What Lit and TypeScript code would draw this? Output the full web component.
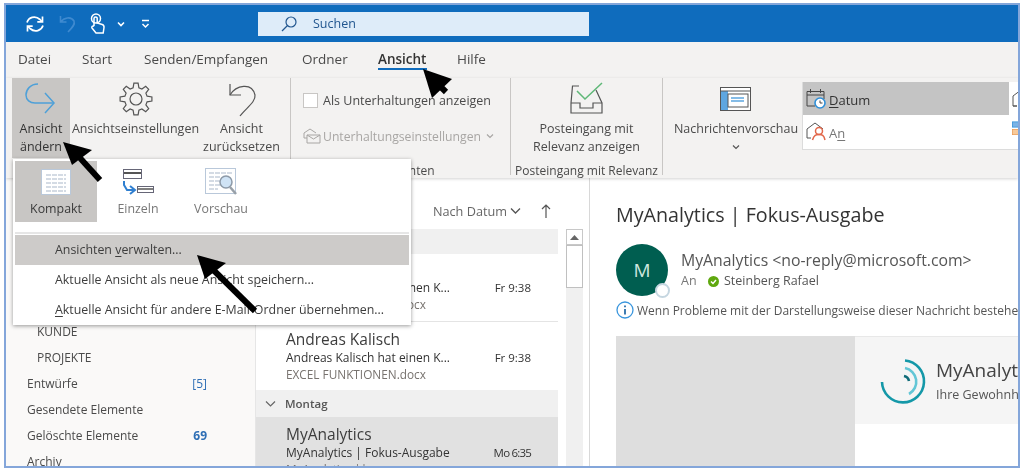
import { LitElement, html, css, svg } from "lit";
import { customElement } from "lit/decorators.js";

// 8 tooth gear outline, returned as svg polygon points
function gearPoints(cx: number, cy: number, outer: number, inner: number) {
  const pts: string[] = [];
  const teeth = 8;
  for (let i = 0; i < teeth; i++) {
    const a = (i / teeth) * Math.PI * 2;
    const step = (Math.PI * 2) / teeth;
    const list: [number, number][] = [
      [inner, a - step * 0.32],
      [outer, a - step * 0.17],
      [outer, a + step * 0.17],
      [inner, a + step * 0.32],
    ];
    for (const [r, t] of list) {
      pts.push(`${(cx + r * Math.cos(t)).toFixed(1)},${(cy + r * Math.sin(t)).toFixed(1)}`);
    }
  }
  return pts.join(" ");
}

const FOLDERS = [
  { name: "KUNDE", sub: true },
  { name: "PROJEKTE", sub: true },
  { name: "Entwürfe", count: "[5]" },
  { name: "Gesendete Elemente" },
  { name: "Gelöschte Elemente", count: "69", bold: true },
  { name: "Archiv" },
];

const TABS = ["Datei", "Start", "Senden/Empfangen", "Ordner", "Ansicht", "Hilfe"];

@customElement("app-root")
export class AppRoot extends LitElement {
  static styles = css`
    :host {
      display: block;
      width: 1024px;
      height: 471px;
      overflow: hidden;
      background: #fff;
      font-family: "Open Sans", "Noto Sans", sans-serif;
      color: #444;
    }
    svg { display: block; }
    .frame {
      position: relative;
      box-sizing: border-box;
      margin: 3px 4px 0;
      width: 1016px;
      height: 465px;
      border: 2px solid #84a6da;
      display: flex;
      flex-direction: column;
      overflow: hidden;
      filter: blur(0.4px);
    }

    /* title bar */
    .title {
      height: 37px;
      flex: none;
      background: #0f6cbd;
      display: flex;
      align-items: center;
      padding-left: 19px;
    }
    .qat { display: flex; align-items: center; width: 233px; }
    .search {
      width: 331px;
      height: 24px;
      background: #deecf9;
      display: flex;
      align-items: center;
      gap: 16px;
      padding-left: 23px;
      box-sizing: border-box;
      color: #21568f;
      font-size: 12.5px;
    }

    /* tabs */
    .tabs {
      height: 36px;
      flex: none;
      background: #f3f2f1;
      display: flex;
      align-items: center;
      padding: 0 0 2px 12px;
      box-sizing: border-box;
      font-size: 13.5px;
      color: #4a4a4a;
    }
    .tab { position: relative; line-height: 18px; }
    .tab:nth-child(1) { width: 64px; }
    .tab:nth-child(2) { width: 62px; }
    .tab:nth-child(3) { width: 158px; }
    .tab:nth-child(4) { width: 76px; }
    .tab:nth-child(5) { width: 79px; }
    .tab.on { color: #333; font-weight: 600; }
    .tab.on::after {
      content: "";
      position: absolute;
      left: 0;
      bottom: -2px;
      width: 49px;
      height: 2.5px;
      background: #0f6cbd;
    }

    /* ribbon */
    .ribbon {
      height: 100px;
      flex: none;
      background: #f3f2f1;
      display: flex;
      box-shadow: 0 1px 3px rgba(0, 0, 0, 0.18);
      position: relative;
      z-index: 1;
      font-size: 12.5px;
      color: #4a4a4a;
    }
    .group {
      position: relative;
      flex: none;
      box-sizing: border-box;
      height: 97px;
      border-right: 1px solid #c8c6c4;
      display: flex;
    }
    .g1 { width: 285px; padding-left: 6px; }
    .g2 { width: 220px; padding: 13px 0 0 12px; flex-direction: column; }
    .g3 { width: 152px; justify-content: center; }
    .g4 { border: none; flex: 1; padding-left: 11px; }
    .group-label {
      position: absolute;
      bottom: -3px;
      left: 0;
      right: 0;
      text-align: center;
      font-size: 12px;
      line-height: 15px;
      white-space: nowrap;
    }
    .big {
      display: flex;
      flex-direction: column;
      align-items: center;
      text-align: center;
      line-height: 18px;
      box-sizing: border-box;
      height: 80px;
      padding-top: 3px;
      white-space: nowrap;
    }
    .big svg { height: 38px; flex: none; margin-bottom: 1px; }
    .big.active { width: 58px; background: #c8c6c4; color: #333; }
    .big.settings { width: 127px; margin-left: 2px; }
    .big.reset { width: 73px; margin-left: 6px; }
    .big.relevance { width: 150px; }
    .big.preview { width: 124px; }
    .check-row { display: flex; align-items: center; gap: 5px; height: 18px; white-space: nowrap; }
    .checkbox { width: 13px; height: 13px; background: #fff; border: 1px solid #c8c6c4; flex: none; }
    .conv-row {
      display: flex;
      align-items: center;
      gap: 2px;
      height: 18px;
      margin-top: 18px;
      color: #a8a6a4;
      font-size: 12.2px;
      white-space: nowrap;
    }
    .gallery {
      margin: 4px 0 0 4px;
      flex: none;
      width: 218px;
      height: 67px;
      background: #fff;
      border-bottom: 1px solid #dcdcdc;
      border-left: 1px solid #dcdcdc;
      display: grid;
      grid-template-columns: 206px 12px;
      grid-template-rows: 33px 33px;
      font-size: 13px;
    }
    .cell { display: flex; align-items: center; gap: 3px; padding-left: 3px; overflow: hidden; }
    .cell.sel { background: #c4c4c4; color: #333; }
    .cell span { padding-top: 3px; }
    .cell u { text-underline-offset: 2px; }

    /* main area */
    .main { flex: 1; display: flex; min-height: 0; }
    .folders {
      width: 250px;
      flex: none;
      background: #faf9f8;
      border-right: 1px solid #e6e6e6;
      box-sizing: border-box;
      padding-top: 140px;
      font-size: 12px;
      color: #4a4a4a;
    }
    .folder {
      height: 26px;
      display: flex;
      align-items: center;
      justify-content: space-between;
      padding: 0 48px 0 21px;
      white-space: nowrap;
    }
    .folder.sub { padding-left: 31px; }
    .count { color: #2f6fb5; }
    .count.bold { font-weight: 700; }

    .list { width: 302px; flex: none; display: flex; flex-direction: column; }
    .sort {
      height: 51px;
      flex: none;
      display: flex;
      align-items: center;
      justify-content: flex-end;
      gap: 3px;
      padding-right: 7px;
      padding-top: 15px;
      box-sizing: border-box;
      font-size: 12.7px;
      color: #666;
    }
    .sort svg:last-child { margin-left: 17px; }
    .day {
      height: 25px;
      flex: none;
      background: #f0f0f0;
      display: flex;
      align-items: center;
      gap: 9px;
      padding-left: 9px;
      font-size: 11.5px;
      font-weight: 600;
      color: #555;
    }
    .mail {
      flex: none;
      box-sizing: border-box;
      padding-left: 30px;
      border-bottom: 1px solid #e4e4e4;
      color: #4a4a4a;
    }
    .mail.first { height: 68px; padding-top: 25px; }
    .mail.second { height: 68px; padding-top: 7px; border: none; }
    .mail.sel { background: #e1e1e1; height: 60px; padding-top: 7px; border: none; }
    .day.monday { height: 27px; }
    .from { font-size: 15.5px; line-height: 20px; color: #3d3d3d; }
    .subj {
      display: flex;
      justify-content: space-between;
      padding-right: 27px;
      font-size: 12px;
      line-height: 17px;
      color: #333;
      white-space: nowrap;
    }
    .subj span { font-size: 11.5px; }
    .subj span.tight { letter-spacing: -0.8px; }
    .prev { font-size: 11.8px; line-height: 16px; color: #77726e; white-space: nowrap; }

    .scroll { width: 32px; flex: none; padding-left: 8px; box-sizing: border-box; padding-top: 51px; border-right: 1px solid #d8d8d8; }
    .track { width: 17px; height: 100%; background: #f0f0f0; box-sizing: border-box; }
    .arrow-btn {
      height: 16px;
      background: #fff;
      border: 1px solid #c8c8c8;
      box-sizing: border-box;
      display: flex;
      align-items: center;
      justify-content: center;
    }
    .thumb { height: 43px; background: #fff; border: 1px solid #c0c0c0; box-sizing: border-box; }

    .reading { flex: 1; padding: 24px 0 0 26px; min-width: 0; overflow: hidden; white-space: nowrap; }
    .subject-line { font-size: 19.7px; line-height: 26px; color: #333; }
    .sender { display: flex; margin-top: 16px; height: 53px; }
    .avatar {
      position: relative;
      width: 52px;
      height: 52px;
      border-radius: 50%;
      background: #005e50;
      color: #cfe6df;
      font-size: 19px;
      display: flex;
      align-items: center;
      justify-content: center;
      flex: none;
    }
    .presence {
      position: absolute;
      right: -2px;
      bottom: -2px;
      width: 11px;
      height: 11px;
      border-radius: 50%;
      background: #fff;
      border: 2px solid #c5d6e0;
    }
    .sender-text { margin-left: 13px; padding-top: 5px; }
    .sender-name { font-size: 15.8px; line-height: 22px; color: #555; }
    .to { display: flex; align-items: center; font-size: 12.5px; line-height: 20px; color: #555; }
    .to .an { width: 27px; color: #777; }
    .to svg { margin-right: 5px; }
    .info { display: flex; align-items: center; gap: 3px; margin-top: 4px; font-size: 12px; height: 18px; color: #555; }
    .info svg { flex: none; }
    .content { display: flex; margin-top: 17px; height: 131px; }
    .photo { width: 239px; flex: none; background: #dedede; }
    .banner {
      flex: 1;
      height: 88px;
      background: #f5f5f5;
      border-top: 1px solid #e8e8e8;
      display: flex;
      align-items: center;
      gap: 10px;
      padding: 2px 0 0 25px;
      box-sizing: border-box;
    }
    .banner-name { font-size: 19px; line-height: 26px; color: #444; }
    .banner-sub { font-size: 12.5px; line-height: 22px; color: #555; margin-top: 1px; }

    /* dropdown */
    .menu {
      position: absolute;
      left: 7px;
      top: 154px;
      width: 398px;
      height: 166px;
      box-sizing: border-box;
      background: #fff;
      box-shadow: 0 1px 4px rgba(0, 0, 0, 0.4);
      padding: 2px;
      z-index: 2;
      font-size: 12.4px;
      color: #444;
    }
    .views { display: flex; height: 61px; }
    .view { display: flex; flex-direction: column; align-items: center; width: 82px; padding-top: 6px; box-sizing: border-box; color: #777; }
    .view svg { height: 30px; margin-bottom: 3px; }
    .view.on { background: #c8c6c4; color: #3a3a3a; }
    .view:nth-child(3) { margin-left: 1px; }
    .menu-sep { height: 2px; margin-top: 10px; background: #e6e6e6; }
    .menu-item { height: 30px; box-sizing: border-box; padding: 0 0 2px 40px; display: flex; align-items: center; color: #3d3d3d; white-space: nowrap; }
    .menu-item.on { background: #cdcbc9; margin-top: 1px; }
    .menu-item u { text-underline-offset: 2px; }

    .pointers { position: absolute; left: -6px; top: -5px; z-index: 3; pointer-events: none; }
  `;

  private renderTitle() {
    return html`<div class="title">
      <div class="qat">
        <svg width="20" height="20" viewBox="0 0 20 20" fill="none" stroke="#fff" stroke-width="1.7">
          <path d="M2 8.5C3.5 3.5 10 1 15 5.5L17 7.5" />
          <path d="M17.5 2.5V7.8H12.3" />
          <path d="M18 11.5C16.5 16.5 10 19 5 14.5L3 12.5" />
          <path d="M2.5 17.5V12.2H7.7" />
        </svg>
        <svg style="margin-left:14px" width="18" height="20" viewBox="0 0 18 20" fill="none" stroke="#3f8ad0" stroke-width="1.6">
          <path d="M1.5 2V8H7.5M1.5 8C5 3.5 12 2 15 7C16.5 10.5 13 14 9 18" />
        </svg>
        <svg style="margin-left:13px" width="16" height="22" viewBox="0 0 16 22" fill="none" stroke="#fff" stroke-width="1.5">
          <circle cx="6" cy="5.5" r="4.5" />
          <path d="M4 13V5.5a1.6 1.6 0 0 1 3.2 0V10l5 1.5c1.4.5 2 1.500 1.800 3l-.8 5.500H6L2 15c-.8-1.200.8-2.600 2-1.500" />
        </svg>
        <svg style="margin-left:11px" width="8" height="6" viewBox="0 0 8 6" fill="none" stroke="#fff" stroke-width="1.6">
          <path d="M1 1.500L4 4.500L7 1.500" />
        </svg>
        <svg style="margin-left:16px" width="9" height="10" viewBox="0 0 9 10" fill="none" stroke="#fff" stroke-width="1.5">
          <path d="M1 1.500H8M1.500 5L4.500 8L7.500 5" />
        </svg>
      </div>
      <div class="search">
        <svg width="16" height="16" viewBox="0 0 16 16" fill="none" stroke="#21568f" stroke-width="1.2">
          <circle cx="10" cy="6" r="5" />
          <path d="M6.500 9.500L1 15" />
        </svg>
        Suchen
      </div>
    </div>`;
  }

  private renderTabs() {
    return html`<div class="tabs">
      ${TABS.map((t) => html`<div class="tab ${t === "Ansicht" ? "on" : ""}">${t}</div>`)}
    </div>`;
  }

  private renderRibbon() {
    return html`<div class="ribbon">
      <div class="group g1">
        <div class="big active">
          <svg width="34" height="38" viewBox="0 0 34 38" fill="none" stroke="#4ea0d8" stroke-width="1.500">
            <path d="M14 3C6 3 2 9 2 14C2 19 6 22 11 22H30" />
            <path d="M21 12L30 22L21 32" />
          </svg>
          Ansicht<br />ändern
        </div>
        <div class="big settings">
          <svg width="34" height="38" viewBox="0 0 34 38" fill="none" stroke="#555" stroke-width="1.200">
            <polygon points="${gearPoints(17, 18, 16, 11.5)}" />
            <circle cx="17" cy="18" r="6" />
          </svg>
          Ansichtseinstellungen
        </div>
        <div class="big reset">
          <svg width="34" height="38" viewBox="0 0 34 38" fill="none" stroke="#555" stroke-width="1.200">
            <path d="M5 3V14H16" />
            <path d="M5 14C11 4 27 1 30 14C31 21 21 27 15 35" />
          </svg>
          Ansicht<br />zurücksetzen
        </div>
      </div>
      <div class="group g2">
        <div class="check-row"><div class="checkbox"></div>Als Unterhaltungen anzeigen</div>
        <div class="conv-row">
          <svg width="18" height="16" viewBox="0 0 18 16" fill="none" stroke="#a8a6a4">
            <path d="M1 5L7 1L13 5M1 5V10H4M4 7H17V15H4ZM4 7L10.500 11L17 7" />
          </svg>
          Unterhaltungseinstellungen
          <svg style="margin-left:3px" width="8" height="6" viewBox="0 0 8 6" fill="none" stroke="#a8a6a4" stroke-width="1.200"><path d="M1 1.500L4 4.500L7 1.500" /></svg>
        </div>
        <div class="group-label">Nachrichten</div>
      </div>
      <div class="group g3">
        <div class="big relevance">
          <svg width="34" height="38" viewBox="0 0 34 38" fill="none">
            <path d="M9 6H2.500L1 23V33H32V23L26 10" stroke="#555" stroke-width="1.200" transform="translate(0 -1)" />
            <path d="M1 22H10V27H23V22H32" stroke="#555" stroke-width="1.200" />
            <path d="M7 10L15 18L32 2" stroke="#5fb878" stroke-width="1.500" />
          </svg>
          Posteingang mit<br />Relevanz anzeigen
        </div>
        <div class="group-label">Posteingang mit Relevanz</div>
      </div>
      <div class="group g4">
        <div class="big preview">
          <svg width="34" height="38" viewBox="0 0 34 38" fill="none" style="margin-top:3px;margin-bottom:-2px">
            <rect x="1.500" y="3.500" width="30" height="23" fill="#fff" stroke="#555" />
            <rect x="2" y="7" width="7" height="19" fill="#5ea6e0" />
            <path d="M1.500 7H31.500" stroke="#555" />
            <rect x="9" y="10" width="20" height="13" fill="#fff" stroke="#555" />
            <path d="M12 14H25M12 17H25" stroke="#5ea6e0" stroke-width="1.500" />
          </svg>
          Nachrichtenvorschau
          <svg style="height:6px;margin:6px 0 0" width="8" height="6" viewBox="0 0 8 6" fill="none" stroke="#555" stroke-width="1.200"><path d="M1 1.500L4 4.500L7 1.500" /></svg>
        </div>
        <div class="gallery">
          <div class="cell sel">
            <svg width="20" height="22" viewBox="0 0 20 22" fill="none">
              <path d="M1 3.500H18V11M1 7H18M1 3.500V18H9M4.500 1V5M14.500 1V5" stroke="#444" />
              <circle cx="14" cy="15" r="5" fill="#fff" stroke="#2f8fd8" stroke-width="1.600" />
              <path d="M14 12.500V15H16.500" stroke="#444" />
            </svg>
            <span><u>D</u>atum</span>
          </div>
          <div class="cell">
            <svg width="20" height="19" viewBox="0 0 20 19" fill="none" stroke="#555" style="margin-top:-1px;flex:none">
              <path d="M1 7L9 1L17 7M1 7V17H5M1 17H5" />
            </svg>
          </div>
          <div class="cell">
            <svg width="20" height="20" viewBox="0 0 20 20" fill="none">
              <path d="M1 7L9 1L17 7M1 7V16H5" stroke="#555" />
              <circle cx="13" cy="9" r="3.500" stroke="#e2674a" stroke-width="1.500" />
              <path d="M6.500 18C8 13 10 12.500 13 12.500C16 12.500 18 13 19 18" stroke="#e2674a" stroke-width="1.500" />
            </svg>
            <span style="color:#777">A<u>n</u></span>
          </div>
          <div class="cell">
            <svg style="margin-top:-6px" width="12" height="22" viewBox="0 0 12 22">
              <rect x="0.500" y="1.500" width="11" height="7" fill="#7ab3e6" stroke="#2f8fd8" />
              <rect x="0.500" y="11.500" width="11" height="7" fill="#f7c99a" stroke="#ea9a55" />
            </svg>
          </div>
        </div>
      </div>
    </div>`;
  }

  private renderFolders() {
    return html`<div class="folders">
      ${FOLDERS.map(
        (f) => html`<div class="folder ${f.sub ? "sub" : ""}">
          <span>${f.name}</span>
          ${f.count ? html`<span class="count ${f.bold ? "bold" : ""}">${f.count}</span>` : ""}
        </div>`,
      )}
    </div>`;
  }

  private renderList() {
    const down = svg`<path d="M1 1.500L5.500 6L10 1.500" />`;
    return html`<div class="list">
      <div class="sort">
        Nach Datum
        <svg width="11" height="8" viewBox="0 0 11 8" fill="none" stroke="#555" stroke-width="1.300">${down}</svg>
        <svg width="10" height="14" viewBox="0 0 10 14" fill="none" stroke="#555" stroke-width="1.200"><path d="M5 14V1M1 5L5 1L9 5" /></svg>
      </div>
      <div class="day"></div>
      <div class="mail first">
        <div class="subj">Andreas Kalisch hat einen K...<span>Fr 9:38</span></div>
        <div class="prev">EXCEL FUNKTIONEN.docx</div>
      </div>
      <div class="mail second">
        <div class="from">Andreas Kalisch</div>
        <div class="subj">Andreas Kalisch hat einen K...<span>Fr 9:38</span></div>
        <div class="prev">EXCEL FUNKTIONEN.docx</div>
      </div>
      <div class="day monday">
        <svg width="11" height="8" viewBox="0 0 11 8" fill="none" stroke="#666" stroke-width="1.200">${down}</svg>
        Montag
      </div>
      <div class="mail sel">
        <div class="from">MyAnalytics</div>
        <div class="subj">MyAnalytics | Fokus-Ausgabe<span class="tight">Mo 6:35</span></div>
        <div class="prev">MyAnalytics ||</div>
      </div>
    </div>`;
  }

  private renderReading() {
    return html`<div class="reading">
      <div class="subject-line">MyAnalytics | Fokus-Ausgabe</div>
      <div class="sender">
        <div class="avatar">M<div class="presence"></div></div>
        <div class="sender-text">
          <div class="sender-name">MyAnalytics &lt;no-reply@microsoft.com&gt;</div>
          <div class="to">
            <span class="an">An</span>
            <svg width="11" height="11" viewBox="0 0 11 11">
              <circle cx="5.500" cy="5.500" r="5.500" fill="#5fa80f" />
              <path d="M3 5.500L5 7.500L8 4" fill="none" stroke="#fff" stroke-width="1.500" />
            </svg>
            Steinberg Rafael
          </div>
        </div>
      </div>
      <div class="info">
        <svg width="18" height="18" viewBox="0 0 18 18" fill="none">
          <circle cx="9" cy="9" r="8" stroke="#3a96dd" stroke-width="1.300" />
          <path d="M9 8V13.500M9 4.500V6.300" stroke="#2b6ea8" stroke-width="1.800" />
        </svg>
        Wenn Probleme mit der Darstellungsweise dieser Nachricht bestehen, klicken Sie hier
      </div>
      <div class="content">
        <div class="photo"></div>
        <div class="banner">
          <svg width="46" height="46" viewBox="0 0 46 46" fill="none" style="flex:none">
            <path d="M25 1.500A21 21 0 1 1 2 23" stroke="#1498a8" stroke-width="2.600" />
            <path d="M25 9A14 14 0 0 1 29 35" stroke="#63c6d6" stroke-width="2.600" />
            <path d="M24 17A6.500 6.500 0 0 1 29 22" stroke="#0f6b78" stroke-width="2.600" />
          </svg>
          <div>
            <div class="banner-name">MyAnalytics</div>
            <div class="banner-sub">Ihre Gewohnheiten</div>
          </div>
        </div>
      </div>
    </div>`;
  }

  private renderMenu() {
    const lines = svg`<path d="M5 8H25M5 12H25M5 16H25M5 20H25M5 24H25" stroke="#a9b7c9" stroke-dasharray="5 1" />`;
    return html`<div class="menu">
      <div class="views">
        <div class="view on">
          <svg width="30" height="30" viewBox="0 0 30 30">
            <rect x="0.500" y="2.500" width="29" height="25" fill="#fff" stroke="#b9c8da" />
            ${lines}
          </svg>
          Kompakt
        </div>
        <div class="view">
          <svg width="34" height="30" viewBox="0 0 34 30" fill="none">
            <rect x="2.500" y="2.500" width="18" height="9" fill="#fff" stroke="#667" />
            <path d="M3 6H20" stroke="#555" stroke-width="2" />
            <rect x="16.500" y="19.500" width="16" height="6" fill="#fff" stroke="#667" />
            <path d="M17 22H32" stroke="#555" stroke-width="1.500" />
            <path d="M3 14V18L6 23H13M9 19L14 23L9 27" stroke="#2f7fd0" stroke-width="2" />
          </svg>
          Einzeln
        </div>
        <div class="view">
          <svg width="34" height="30" viewBox="0 0 34 30">
            <rect x="1.500" y="1.500" width="30" height="25" fill="#fff" stroke="#b9c8da" />
            <path d="M5 6H28M5 10H16M5 14H16M5 18H16M5 22H14" stroke="#a9b7c9" stroke-dasharray="5 1" />
            <circle cx="22" cy="15" r="6" fill="#cfe3f5" stroke="#8d9aa8" stroke-width="1.500" />
            <path d="M26 20L32 27" stroke="#98a0a8" stroke-width="2.500" />
          </svg>
          Vorschau
        </div>
      </div>
      <div class="menu-sep"></div>
      <div class="menu-item on"><span>Ansichten <u>v</u>erwalten...</span></div>
      <div class="menu-item"><span>Aktuelle Ansicht als neue Ansicht s<u>p</u>eichern...</span></div>
      <div class="menu-item"><span><u>A</u>ktuelle Ansicht für andere E-Mail-Ordner übernehmen...</span></div>
    </div>`;
  }

  // the annotation arrows sit on top of the screenshot, coordinates are page pixels
  private renderPointers() {
    const arrows = [
      { tip: [423, 69], a: [452, 79], b: [432, 98], tail: [446, 92] },
      { tip: [63, 142], a: [92, 150], b: [72, 165], tail: [100, 180] },
      { tip: [197, 255], a: [226, 263], b: [205, 279], tail: [255, 311] },
    ];
    return html`<svg class="pointers" width="1024" height="471" viewBox="0 0 1024 471">
      ${arrows.map(
        (p) => svg`
          <polygon points="${p.tip.join(",")} ${p.a.join(",")} ${p.b.join(",")}" fill="#000" />
          <line x1="${(p.tip[0] + (p.a[0] + p.b[0]) / 2) / 2}" y1="${(p.tip[1] + (p.a[1] + p.b[1]) / 2) / 2}"
            x2="${p.tail[0]}" y2="${p.tail[1]}" stroke="#000" stroke-width="6" />`,
      )}
    </svg>`;
  }

  render() {
    return html`<div class="frame">
      ${this.renderTitle()} ${this.renderTabs()} ${this.renderRibbon()}
      <div class="main">
        ${this.renderFolders()} ${this.renderList()}
        <div class="scroll">
          <div class="track">
            <div class="arrow-btn">
              <svg width="9" height="5" viewBox="0 0 9 5"><path d="M4.500 0L9 5H0Z" fill="#666" /></svg>
            </div>
            <div class="thumb"></div>
          </div>
        </div>
        ${this.renderReading()}
      </div>
      ${this.renderMenu()} ${this.renderPointers()}
    </div>`;
  }
}

declare global {
  interface HTMLElementTagNameMap {
    "app-root": AppRoot;
  }
}
